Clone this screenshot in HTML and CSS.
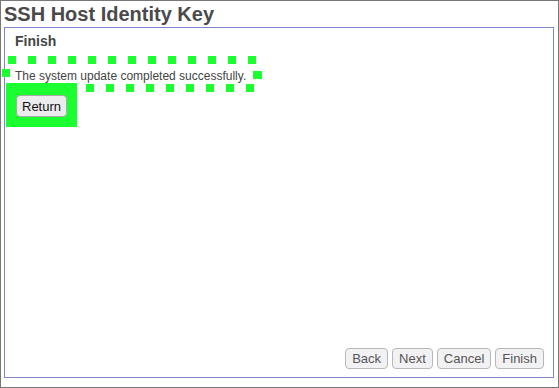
FILE: index.html
```html
<!DOCTYPE html>
<html lang="en">
  <head>
    <meta charset="UTF-8" />
    <title>SSH Host Identity Key</title>
    <link rel="stylesheet" href="styles.css">
  </head>
  <body>
    <h1>SSH Host Identity Key</h1>

    <div class="panel">
      <h2>Finish</h2>

      <p class="msg">
        The system update completed successfully.
        <span class="dots"></span>
      </p>

      <div class="focus">
        <button type="button" class="return">Return</button>
      </div>

      <div class="actions">
        <button type="button">Back</button>
        <button type="button">Next</button>
        <button type="button">Cancel</button>
        <button type="button">Finish</button>
      </div>
    </div>
  </body>
</html>
```

FILE: styles.css
```css
html,
body {
  height: 100%;
}
body {
  margin: 0;
  box-sizing: border-box;
  border: 1px solid #777;
  display: flex;
  flex-direction: column;
  font-family: "Liberation Sans", Arial, sans-serif;
  background: #fff;
}
h1 {
  margin: 0;
  padding-left: 3px;
  font-size: 20px;
  line-height: 26px;
  color: #4a4a4a;
}
.panel {
  flex: 1;
  margin: 0 4px 9px 3px;
  border: 1px solid #7b87c8;
  display: flex;
  flex-direction: column;
  padding: 0 9px 8px 10px;
}
h2 {
  margin: 5px 0 0;
  font-size: 14px;
  line-height: 16px;
  color: #444;
}
.msg {
  position: relative;
  margin: 20px 0 0;
  font-size: 12px;
  line-height: 14px;
  color: #444;
}
.dots {
  position: absolute;
  left: -13px;
  top: -13px;
  width: 261px;
  height: 37px;
  background:
    linear-gradient(#1bff30, #1bff30) 0 13px / 8px 8px no-repeat,
    linear-gradient(#1bff30, #1bff30) 251px 15px / 9px 8px no-repeat,
    repeating-linear-gradient(to right, transparent 0 6px, #1bff30 6px 14px, transparent 14px 20px) 0 0 / 256px 8px no-repeat,
    repeating-linear-gradient(to right, transparent 0 4px, #1bff30 4px 12px, transparent 12px 20px) 0 28px / 254px 8px no-repeat;
}
.focus {
  position: relative;
  z-index: 1;
  width: fit-content;
  margin-left: -9px;
  padding: 12px 10px 10px;
  background: #1bff30;
}
button {
  font-family: "Liberation Sans", Arial, sans-serif;
  font-size: 13px;
  height: 21px;
  padding: 0 6px;
  border: 1px solid #b8b8b8;
  border-radius: 4px;
  background: #f2f2f4;
  color: #555;
}
.return {
  display: block;
  height: 22px;
  padding: 0 5px;
  color: #111;
  border-color: #a9a9a9;
  background: #ececee;
}
.actions {
  margin-top: auto;
  display: flex;
  justify-content: flex-end;
  gap: 4px;
}
```
